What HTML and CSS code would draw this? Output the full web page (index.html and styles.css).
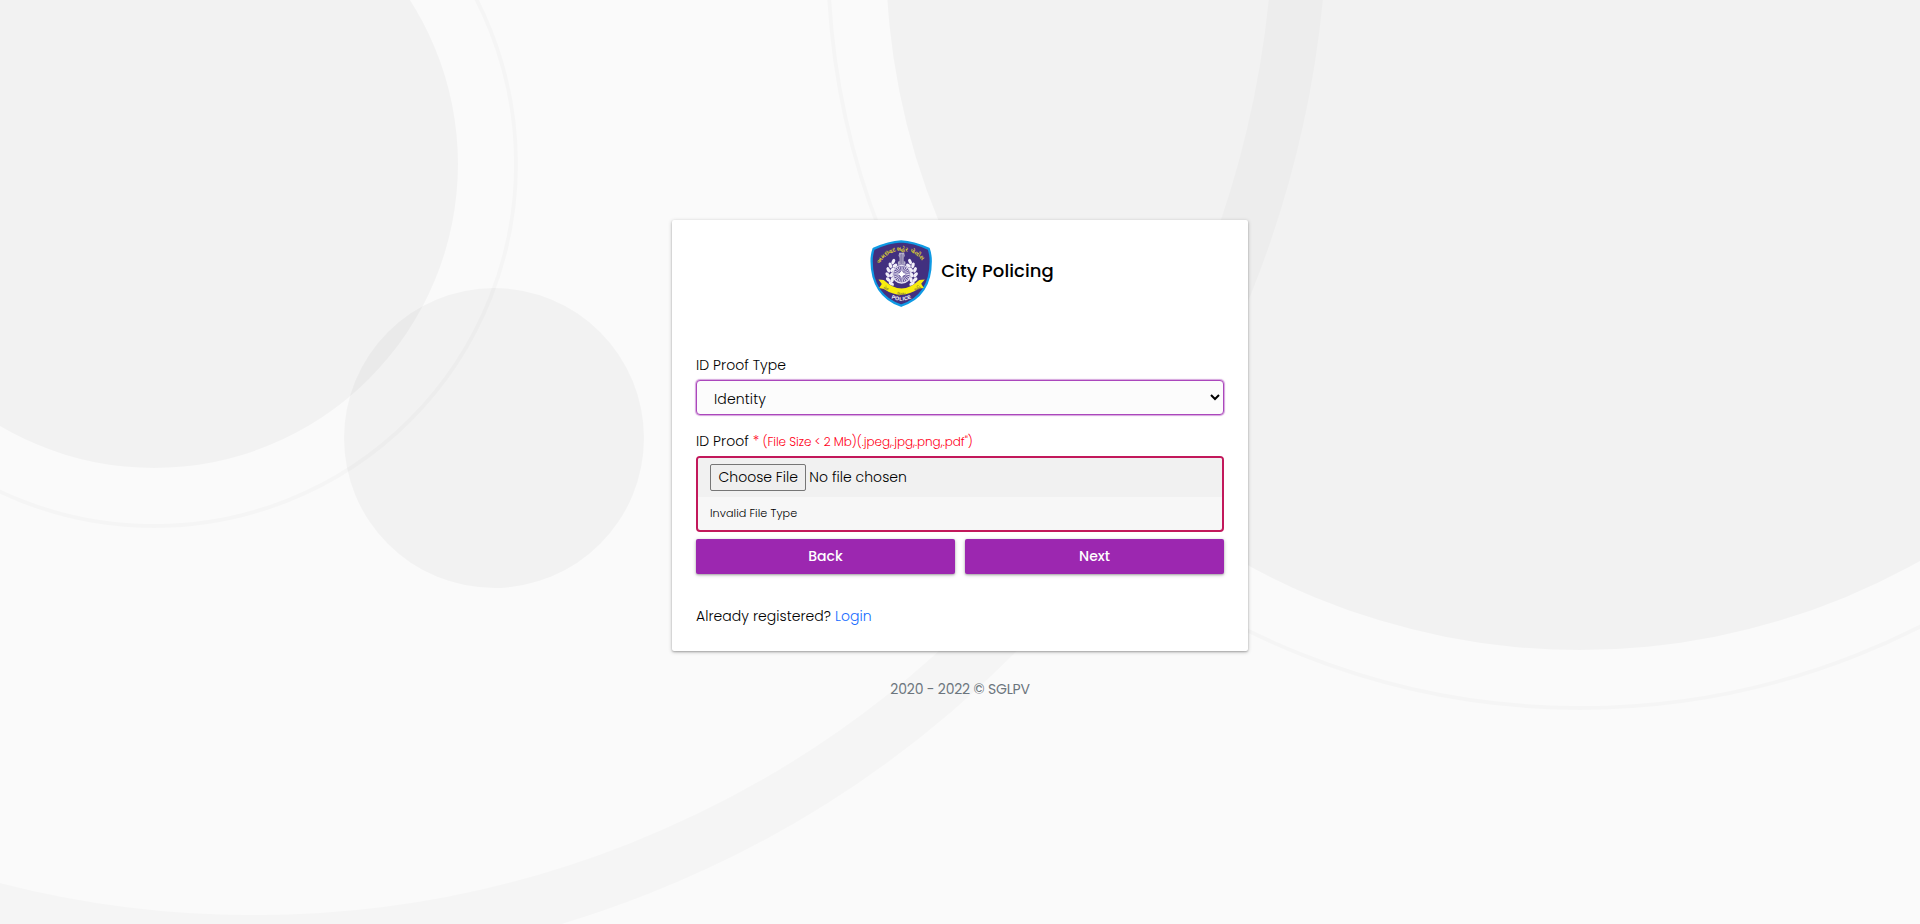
FILE: index.html
```html
<!DOCTYPE html>
<html lang="en">
<head>
<meta charset="utf-8">
<title>City Policing</title>
<link rel="stylesheet" href="styles.css">
</head>
<body>
<svg class="backdrop" viewBox="0 0 1920 924" preserveAspectRatio="xMidYMid slice" aria-hidden="true">
  <g fill="#000" fill-opacity=".031">
    <circle cx="154" cy="164" r="304"/>
    <circle cx="494" cy="438" r="150"/>
    <circle cx="1580" cy="-44" r="694"/>
  </g>
  <g fill="none" stroke="#000" stroke-opacity=".018">
    <circle cx="154" cy="164" r="362" stroke-width="4"/>
    <circle cx="1580" cy="-44" r="752" stroke-width="4"/>
    <circle cx="254" cy="-105" r="1047" stroke-width="54"/>
  </g>
</svg>
<main class="page">
  <section class="card">
    <header class="brand">
      <svg class="logo" viewBox="29 28 188 204" role="img" aria-label="City police crest">
        <defs>
          <path id="arcTop" d="M57 101C74 48 172 48 191 101"/>
          <path id="arcPolice" d="M86 202Q122 224 160 201"/>
          <path id="arcMotto" d="M62 170Q123 220 186 169"/>
        </defs>
        <path d="M122 32C150 33 178 42 206 55C210 66 212 77 212 93C212 160 182 208 122 228C63 208 32 160 32 93C32 77 34 66 38 55C66 42 94 33 122 32z" fill="#42307f" stroke="#0f9ae4" stroke-width="7"/>
        <text class="crest-arc"><textPath href="#arcTop" textLength="156">અમદાવાદ શહેર પોલીસ</textPath></text>
        <g fill="#f1eef8">
          <g id="wreath">
            <ellipse cx="98" cy="94" rx="5" ry="9" transform="rotate(25 98 94)"/>
            <ellipse cx="89" cy="105" rx="5" ry="9" transform="rotate(-15 89 105)"/>
            <ellipse cx="103" cy="106" rx="5" ry="8" transform="rotate(60 103 106)"/>
            <ellipse cx="83" cy="119" rx="5" ry="9" transform="rotate(-25 83 119)"/>
            <ellipse cx="95" cy="119" rx="5" ry="8" transform="rotate(45 95 119)"/>
            <ellipse cx="81" cy="134" rx="5" ry="9" transform="rotate(-35 81 134)"/>
            <ellipse cx="93" cy="134" rx="5" ry="8" transform="rotate(30 93 134)"/>
            <ellipse cx="83" cy="149" rx="5" ry="9" transform="rotate(-50 83 149)"/>
            <ellipse cx="95" cy="149" rx="5" ry="8" transform="rotate(10 95 149)"/>
            <ellipse cx="92" cy="161" rx="5" ry="9" transform="rotate(-60 92 161)"/>
          </g>
          <use href="#wreath" transform="translate(247 0) scale(-1 1)"/>
        </g>
        <path d="M116 67h15l2 9-3 6v10l5 2v9h-23v-9l5-2V82l-3-6z" fill="#b9b3ce"/>
        <path d="M119 72v28M123.500 70v31M128 72v28" stroke="#655a8e" stroke-width="2"/>
        <circle cx="123.500" cy="132" r="27" fill="#5a4a92" stroke="#e6e2f2" stroke-width="4"/>
        <circle cx="123.500" cy="132" r="17" fill="none" stroke="#e4e0f1" stroke-width="15" stroke-dasharray="2.200 2.250"/>
        <path d="M123.500 122v20M113.500 132h20" stroke="#fff" stroke-width="5"/>
        <circle cx="123.500" cy="132" r="7" fill="#fff"/>
        <path d="M53 148l16 2Q123 202 177 150l17-2-11 13 8 13-15 2Q123 213 69 177l-14-3 8-12z" fill="#f8ed0d"/>
        <text class="crest-motto"><textPath href="#arcMotto" startOffset="4">સેવા</textPath></text>
        <text class="crest-motto"><textPath href="#arcMotto" startOffset="52">સુરક્ષા</textPath></text>
        <text class="crest-motto"><textPath href="#arcMotto" startOffset="110">શાંતિ</textPath></text>
        <text class="crest-police"><textPath href="#arcPolice" startOffset="7" textLength="64">POLICE</textPath></text>
      </svg>
      <h1 class="title">City Policing</h1>
    </header>
    <form class="form">
      <label class="label label-type" for="type">ID Proof Type</label>
      <select class="select" id="type"><option>Identity</option></select>
      <label class="label label-proof" for="proof">ID Proof <span class="hint"><span class="star">*</span> (File Size &lt; 2 Mb)(.jpeg,.jpg,.png,.pdf")</span></label>
      <div class="upload">
        <input class="file" id="proof" type="file">
        <p class="error">Invalid File Type</p>
      </div>
      <div class="actions">
        <button class="btn" type="button">Back</button>
        <button class="btn" type="button">Next</button>
      </div>
    </form>
    <p class="registered">Already registered? <a class="link" href="#">Login</a></p>
  </section>
  <footer class="footer">2020 - 2022 © SGLPV</footer>
</main>
</body>
</html>
```

FILE: styles.css
```css
* { box-sizing: border-box; }
body {
  margin: 0;
  height: 100vh;
  overflow: hidden;
  background: #fafafa;
  color: #000;
  font: 300 14px/20px Poppins, Inter, "Open Sans", sans-serif;
  letter-spacing: .05px;
}
.backdrop { position: absolute; inset: 0; width: 100%; height: 100%; z-index: -1; }
.page { display: flex; flex-direction: column; align-items: center; padding-top: 220px; }
.card {
  width: 576px;
  height: 431px;
  padding: 20px 24px 0;
  background: #fff;
  border-radius: 2px;
  box-shadow: 0 1px 4px rgba(0,0,0,.2), 0 1px 2px rgba(0,0,0,.24);
}
.brand { display: flex; justify-content: center; height: 115px; padding-left: 4px; }
.logo { width: 63px; height: 67px; flex: none; }
.crest-arc { font: 700 17px "Noto Sans", sans-serif; fill: #e3da2c; }
.crest-motto { font: 700 11px "Noto Sans", sans-serif; fill: #857c3c; }
.crest-police { font: 700 16px "Liberation Sans", sans-serif; fill: #fff; }
.title { margin: 18px 0 0 8px; font-size: 18px; line-height: 26px; font-weight: 500; letter-spacing: .08px; }
.form { display: flex; flex-direction: column; }
.label { display: block; height: 20px; }
.label-type { margin-bottom: 5px; }
.label-proof { margin-top: 16px; margin-bottom: 5px; }
.hint { font-size: 12px; letter-spacing: -.07px; color: #ff0018; }
.star { font-size: 14px; }
.select {
  width: 100%;
  height: 35px;
  padding: 2px 2px 0 13px;
  border: 1px solid #ab47bc;
  border-radius: 4px;
  outline: 0;
  background: #fcfcfc;
  color: #000;
  font: inherit;
  letter-spacing: .12px;
  box-shadow: 0 0 1px 1px rgba(171,71,188,.5);
}
.upload { height: 76px; border: 2px solid #c2185b; border-radius: 4px; background: #f7f7f7; overflow: hidden; }
.file { display: block; width: 100%; height: 39px; padding: 6px 12px; background: #f1f1f1; font: inherit; letter-spacing: .04px; }
.file::file-selector-button {
  height: 27px;
  padding: 0 7.5px 2px;
  margin-right: 3px;
  border: 1px solid #767676;
  border-radius: 2px;
  background: #efefef;
  color: #000;
  font: inherit;
}
.error { margin: 7px 12px 0; font-size: 11.2px; line-height: 18px; letter-spacing: .06px; color: #000; }
.actions { display: grid; grid-template-columns: 1fr 1fr; gap: 10px; margin-top: 7px; }
.btn {
  height: 35px;
  padding: 0 0 1px;
  border: 0;
  border-radius: 2px;
  background: #9c27b0;
  color: #fff;
  font: inherit;
  font-weight: 500;
  box-shadow: 0 1px 4px rgba(0,0,0,.2), 0 1px 2px rgba(0,0,0,.24);
}
.registered { margin: 32px 0 0; }
.link { color: #146aff; text-decoration: none; }
.footer { margin-top: 28px; color: #6c757d; font-weight: 400; letter-spacing: -.2px; }
```
